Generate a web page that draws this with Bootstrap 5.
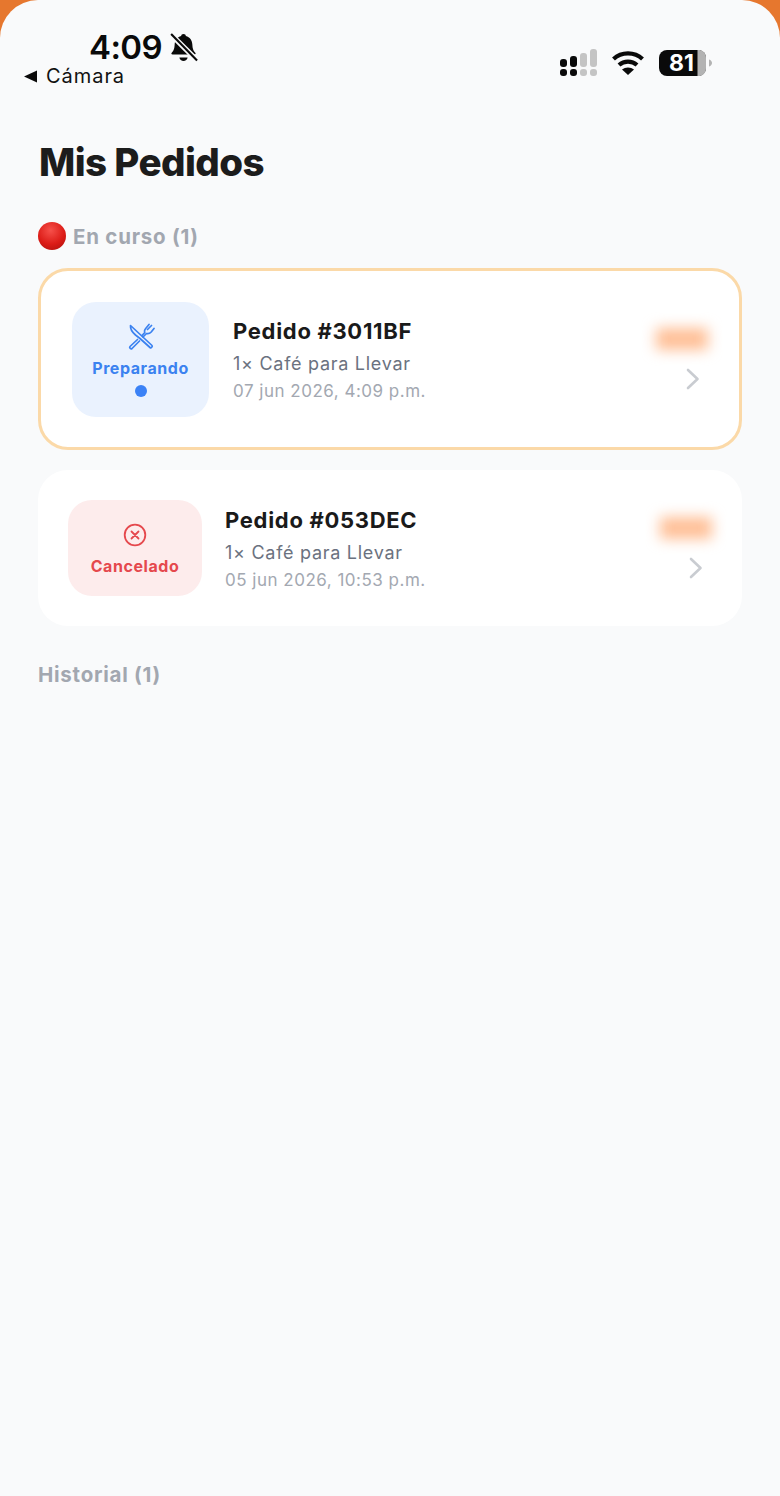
<!doctype html>
<html lang="es">
<head>
<meta charset="utf-8">
<title>Mis Pedidos</title>
<link href="https://cdn.jsdelivr.net/npm/bootstrap@5.3.0/dist/css/bootstrap.min.css" rel="stylesheet">
<style>
html,body{margin:0;height:1496px;overflow:hidden}
body{background:#e6772e;font-family:Inter,"Liberation Sans",sans-serif;color:#1a1a1a}
.app-shell{height:1496px;background:#f9fafb;border-radius:38px 38px 0 0;padding:0 38px}
.status-row{height:96px;margin:0 -38px;padding:0 67px 0 23px}
.status-left{padding-top:27px;width:180px}
.clock{font-size:33px;line-height:40px;font-weight:600;color:#0a0a0a;margin-left:66px;letter-spacing:-.6px;gap:5px}
.back-app{font-size:20px;line-height:20px;margin-top:-1px;color:#111;letter-spacing:.95px}
.status-right{gap:14px;margin-top:49px}
.signal-icon{margin-right:-2px}
.page-title{font-size:38.5px;line-height:46px;font-weight:800;margin:43px 0 0;padding-left:1px;letter-spacing:-.6px;color:#1c1c1c}
.section-label{font-size:20.5px;line-height:26px;font-weight:700;color:#a2a7b0;margin:0;letter-spacing:.75px}
.label-live{margin-top:37px;gap:7px}
.label-live-text{padding-top:2px}
.label-past{margin-top:36px}
.red-dot{width:28px;height:28px;border-radius:50%;background:radial-gradient(circle at 45% 30%,#f6504a 0,#dc1c17 55%,#a80f0c 100%)}
.order-card{background:#fff;border-radius:30px}
.order-active{height:182px;border:3px solid #fbd9a8;padding:0 31px 0 31px;margin-top:18px}
.order-past{height:156px;margin-top:20px;padding:0 30px 0 30px}
.state-box{flex:none;display:flex;flex-direction:column;align-items:center}
.state-blue{width:137px;height:115px;border-radius:24px;background:#eaf2fe;color:#3b82f0;padding-top:21px}
.state-red{width:134px;height:96px;border-radius:24px;background:#fdecec;color:#e5484d;padding-top:23px}
.state-name{font-size:16px;line-height:20px;font-weight:700;letter-spacing:.55px;margin-top:9px}
.state-blue .state-name{margin-top:7px}
.state-pip{width:12px;height:12px;border-radius:50%;background:#3b82f6;margin-top:7px}
.order-name{font-size:22px;line-height:26px;font-weight:700;letter-spacing:.7px;color:#1a1a1a}
.order-items{font-size:18px;line-height:24px;color:#6b7280;letter-spacing:.72px;margin-top:8px}
.order-date{font-size:17px;line-height:22px;color:#a3a8b1;letter-spacing:.5px;margin-top:4px}
.order-text-a{margin-left:24px;padding-top:2px}
.order-text-b{margin-left:23px;padding-top:2px}
.price-blur{width:52px;height:22px;background:#ffbf96;filter:blur(7px);display:block}
.side-col{width:66px;gap:17px}
.chev-a{margin-right:7px}
.chev-b{margin-right:8px}
</style>
</head>
<body>
<main class="app-shell">
  <div class="status-row d-flex justify-content-between align-items-start">
    <div class="status-left">
      <div class="clock d-flex align-items-center">4:09
        <svg width="33" height="33" viewBox="0 0 28 28" fill="#0a0a0a"><path d="M14 2.500c1.200 0 2 .8 2 1.800 3.400.9 5.300 3.700 5.500 7.200.2 3.800.9 5.300 2.500 7 .6.700.2 1.500-.7 1.500H4.700c-.9 0-1.300-.8-.7-1.500 1.600-1.700 2.300-3.200 2.500-7 .2-3.500 2.100-6.300 5.500-7.200 0-1 .8-1.800 2-1.800z"/><path d="M10.500 22.500h7c-.3 1.900-1.800 3-3.500 3s-3.200-1.100-3.500-3z"/><path d="M3.500 3l22 22" stroke="#f9fafb" stroke-width="4.500"/><path d="M3.500 2.500l22 22.500" stroke="#0a0a0a" stroke-width="1.800"/></svg>
      </div>
      <div class="back-app d-flex align-items-center gap-2">
        <svg width="15" height="13" viewBox="0 0 15 13" fill="#0a0a0a"><path d="M1 6.500 14 .5v12z"/></svg>
        <span>Cámara</span>
      </div>
    </div>
    <div class="status-right d-flex align-items-center">
      <svg class="signal-icon" width="40" height="28" viewBox="0 0 40 28"><g fill="#0a0a0a"><rect x="1" y="10" width="7" height="8" rx="3"/><rect x="11" y="7" width="7" height="11" rx="3"/><rect x="1" y="20" width="7" height="7" rx="3"/><rect x="11" y="20" width="7" height="7" rx="3"/></g><g fill="#c4c4c4"><rect x="21" y="4" width="7" height="14" rx="3"/><rect x="31" y="0" width="7" height="18" rx="3"/><rect x="21" y="20" width="7" height="7" rx="3"/><rect x="31" y="20" width="7" height="7" rx="3"/></g></svg>
      <svg width="34" height="26" viewBox="0 0 34 26" fill="none" stroke="#0a0a0a" stroke-width="4.200"><path d="M2.500 9C10.500 1.500 23.500 1.500 31.500 9"/><path d="M8 15c5-4.500 13-4.500 18 0"/><path d="M17 25l-6-5.600c3.400-2.700 8.600-2.700 12 0z" fill="#0a0a0a" stroke="none"/></svg>
      <svg width="54" height="28" viewBox="0 0 54 28"><rect x="0" y="1" width="47" height="26" rx="8" fill="#0a0a0a"/><path d="M39 1h-.5v26h.5c4.500 0 8-2.500 8-8V9c0-5.500-3.500-8-8-8z" fill="#b3b3b3"/><path d="M50 10.500c2 .6 3 2 3 3.500s-1 2.900-3 3.500z" fill="#b3b3b3"/><text x="10" y="22" font-family="Inter,'Liberation Sans',sans-serif" font-size="23" font-weight="700" fill="#fff">81</text></svg>
    </div>
  </div>

  <h1 class="page-title">Mis Pedidos</h1>

  <p class="section-label label-live d-flex align-items-center"><span class="red-dot"></span><span class="label-live-text">En curso (1)</span></p>

  <div class="order-card order-active d-flex align-items-center">
    <div class="state-box state-blue">
      <svg width="28" height="28" viewBox="0 0 28 28" fill="none" stroke="currentColor" stroke-width="1.700" stroke-linejoin="round" stroke-linecap="round"><path d="M3.500 2.500 25 22.500c.8 1-.9 3-2 2L13 15.500 8.500 12C5 9 3.200 6 3.500 2.500z"/><path d="M16 14l3.500-3.500c2 .6 3.500-.2 4.700-1.500L27 5.500M24.500 2.500l-4 4M22 1.500l-3.500 4.200c-1 1.200-1.200 2.500-.7 3.800L15 12.500"/><path d="M10.500 16.500 3 23.500c-1 1.100.9 3 2 2l7.500-7.500"/></svg>
      <span class="state-name">Preparando</span>
      <span class="state-pip"></span>
    </div>
    <div class="order-text-a flex-grow-1">
      <div class="order-name">Pedido #3011BF</div>
      <div class="order-items">1× Café para Llevar</div>
      <div class="order-date">07 jun 2026, 4:09 p.m.</div>
    </div>
    <div class="side-col d-flex flex-column align-items-end">
      <span class="price-blur"></span>
      <svg width="16" height="24" viewBox="0 0 16 24" fill="none" stroke="#c9ccd1" stroke-width="2.600" stroke-linecap="round" stroke-linejoin="round" class="chev-a"><path d="M3 3l9.500 9L3 21"/></svg>
    </div>
  </div>

  <div class="order-card order-past d-flex align-items-center">
    <div class="state-box state-red">
      <svg width="24" height="24" viewBox="0 0 24 24" fill="none" stroke="currentColor" stroke-width="1.800" stroke-linecap="round"><circle cx="12" cy="12" r="10.300"/><path d="M8.500 8.500l7 7M15.500 8.500l-7 7"/></svg>
      <span class="state-name">Cancelado</span>
    </div>
    <div class="order-text-b flex-grow-1">
      <div class="order-name">Pedido #053DEC</div>
      <div class="order-items">1× Café para Llevar</div>
      <div class="order-date">05 jun 2026, 10:53 p.m.</div>
    </div>
    <div class="side-col d-flex flex-column align-items-end">
      <span class="price-blur"></span>
      <svg width="16" height="24" viewBox="0 0 16 24" fill="none" stroke="#c9ccd1" stroke-width="2.600" stroke-linecap="round" stroke-linejoin="round" class="chev-b"><path d="M3 3l9.500 9L3 21"/></svg>
    </div>
  </div>

  <p class="section-label label-past">Historial (1)</p>
</main>
<script src="https://cdn.jsdelivr.net/npm/bootstrap@5.3.0/dist/js/bootstrap.bundle.min.js"></script>
</body>
</html>
